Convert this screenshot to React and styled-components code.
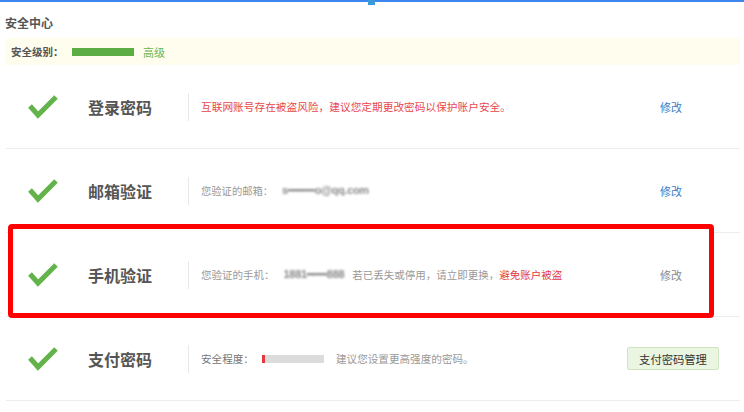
import React from "react";
import styled, { createGlobalStyle } from "styled-components";

const GlobalStyle = createGlobalStyle`
  html, body {
    margin: 0;
    padding: 0;
    background: #fff;
    font-family: "Noto Sans CJK SC", "Liberation Sans", sans-serif;
  }
`;

const Page = styled.div`
  width: 744px;
  height: 412px;
  overflow: hidden;
`;

const TopLine = styled.div`
  height: 2px;
  background: #3d86ee;
  display: flex;
  justify-content: center;
`;

const Marker = styled.div`
  width: 7px;
  height: 5px;
  flex: none;
  margin-left: -2px;
  background: #3a9ad8;
`;

const Content = styled.div`
  padding: 0 4px 0 6px;
`;

const Heading = styled.h2`
  margin: 0;
  padding: 12px 0 0 0;
  height: 24px;
  font-size: 12px;
  line-height: 18px;
  font-weight: bold;
  color: #555;
  margin-left: -1px;
`;

const LevelBar = styled.div`
  height: 27px;
  background: #fffdee;
  display: flex;
  align-items: center;
  padding-left: 5px;
  font-size: 10.5px;
`;

const LevelLabel = styled.span`
  font-weight: bold;
  color: #555;
  width: 61px;
`;

const LevelMeter = styled.span`
  width: 62px;
  height: 8px;
  background: #5cae44;
  margin-right: 9px;
`;

const LevelText = styled.span`
  color: #6cb34f;
  font-size: 11px;
`;

const Row = styled.div`
  position: relative;
  height: 83px;
  border-bottom: 1px solid #ececec;
  display: grid;
  grid-template-columns: 82px 100px 1px 1fr 134px;
  align-items: center;
  & > * {
    position: relative;
  }
`;

const Check = styled.svg`
  width: 30px;
  height: 24px;
  margin-left: 22px;
`;

const Title = styled.div`
  font-size: 16px;
  font-weight: bold;
  color: #555;
`;

const Divider = styled.div`
  width: 1px;
  height: 28px;
  background: #e8e8e8;
`;

const Desc = styled.div`
  padding-left: 12px;
  font-size: ${(p) => p.$size || "10.6px"};
  color: ${(p) => p.$color || "#999"};
  display: flex;
  align-items: center;
  white-space: nowrap;
`;

const Warn = styled.span`
  color: #e23a3e;
`;

const Masked = styled.span`
  color: #8a8a8a;
  filter: blur(0.8px);
  margin: 0 ${(p) => p.$gap || "8px"} 0 9px;
  font-family: "Liberation Sans", sans-serif;
  font-size: 11px;
  font-weight: bold;
  letter-spacing: -0.3px;
`;

const Strength = styled.span`
  display: flex;
  width: 62px;
  height: 8px;
  background: #dcdcdc;
  margin: 0 12px 0 8px;
`;

const StrengthFill = styled.span`
  height: 100%;
  background: #e4393c;
`;

const Link = styled.a`
  margin-left: 54px;
  font-size: 11px;
  color: ${(p) => (p.$muted ? "#888" : "#3b7bc4")};
  text-decoration: none;
  cursor: pointer;
`;

const ManageButton = styled.button`
  justify-self: start;
  margin-left: 21px;
  width: 92px;
  height: 23px;
  padding: 0;
  background: #eaf6e2;
  border: 1px solid #cfe5bf;
  border-radius: 2px;
  font-family: inherit;
  font-size: 11.3px;
  color: #333;
  cursor: pointer;
`;

const Highlight = styled.div`
  position: absolute;
  top: -9px;
  left: 2px;
  width: 706px;
  height: 94px;
  box-sizing: border-box;
  border: 5px solid #ff0000;
  border-radius: 4px;
  background: #fff;
`;

function CheckIcon() {
  return (
    <Check viewBox="0 0 30 24">
      <polyline
        points="2,11 10,20 28,2"
        fill="none"
        stroke="#62b34a"
        strokeWidth="5"
      />
    </Check>
  );
}

export default function App() {
  return (
    <Page>
      <GlobalStyle />
      <TopLine>
        <Marker />
      </TopLine>
      <Content>
        <Heading>安全中心</Heading>
        <LevelBar>
          <LevelLabel>安全级别：</LevelLabel>
          <LevelMeter />
          <LevelText>高级</LevelText>
        </LevelBar>

        <Row>
          <CheckIcon />
          <Title>登录密码</Title>
          <Divider />
          <Desc $color="#e8474b" $size="10.7px">
            互联网账号存在被盗风险，建议您定期更改密码以保护账户安全。
          </Desc>
          <Link>修改</Link>
        </Row>

        <Row>
          <CheckIcon />
          <Title>邮箱验证</Title>
          <Divider />
          <Desc $size="10.3px">
            您验证的邮箱：<Masked>s━━━━o@qq.com</Masked>
          </Desc>
          <Link>修改</Link>
        </Row>

        <Row>
          <Highlight />
          <CheckIcon />
          <Title>手机验证</Title>
          <Divider />
          <Desc $size="10.5px">
            您验证的手机：<Masked $gap="8px">1881━━━888</Masked>
            若已丢失或停用，请立即更换，<Warn>避免账户被盗</Warn>
          </Desc>
          <Link $muted>修改</Link>
        </Row>

        <Row>
          <CheckIcon />
          <Title>支付密码</Title>
          <Divider />
          <Desc $size="10.6px">
            <span style={{ color: "#777" }}>安全程度：</span>
            <Strength>
              <StrengthFill style={{ width: "3px" }} />
            </Strength>
            建议您设置更高强度的密码。
          </Desc>
          <ManageButton>支付密码管理</ManageButton>
        </Row>
      </Content>
    </Page>
  );
}
